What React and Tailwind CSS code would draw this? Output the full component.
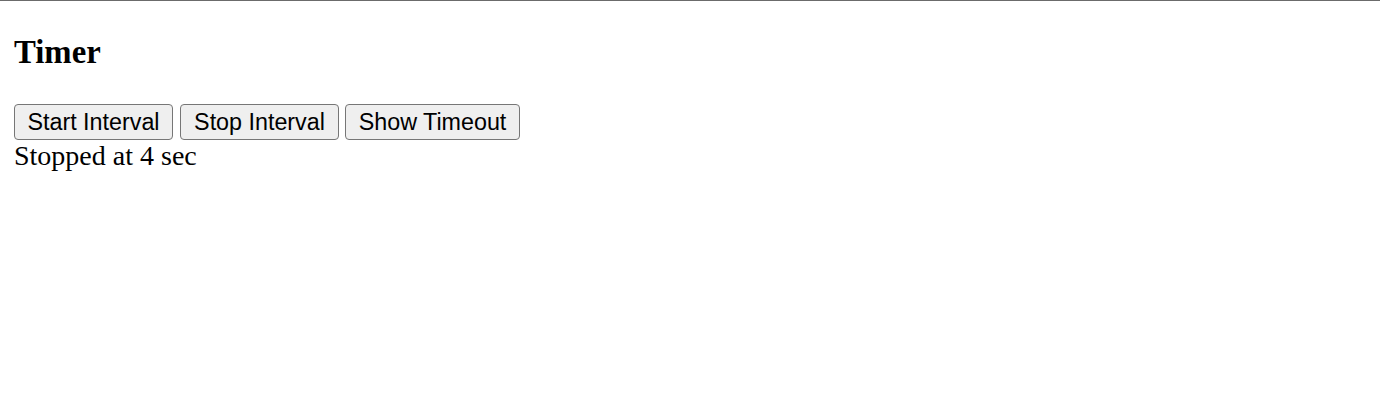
import React from "react";

const buttons = [
  { label: "Start Interval", className: "w-[159px]" },
  { label: "Stop Interval", className: "w-[159px] ml-[7px]" },
  { label: "Show Timeout", className: "w-[175px] ml-[6px]" },
];

const App = () => {
  return (
    <div className="min-h-screen bg-white border-t border-[#6b6b6b] text-black font-['Liberation_Serif',serif]">
      <div className="px-[14px] pt-[32px]">
        <h3 className="text-[32.75px] font-bold leading-[38px] mb-[33px]">Timer</h3>
        <div className="flex">
          {buttons.map((b) => (
            <button
              key={b.label}
              className={`${b.className} h-[36px] pb-[1px] bg-[#efefef] border border-[#767676] rounded-[4px] text-[23.3px] leading-[26px] font-['Liberation_Sans',Arial,sans-serif] flex items-center justify-center`}
            >
              {b.label}
            </button>
          ))}
        </div>
        <div className="text-[28px] leading-[32px]">Stopped at 4 sec</div>
      </div>
    </div>
  );
};

export default App;
